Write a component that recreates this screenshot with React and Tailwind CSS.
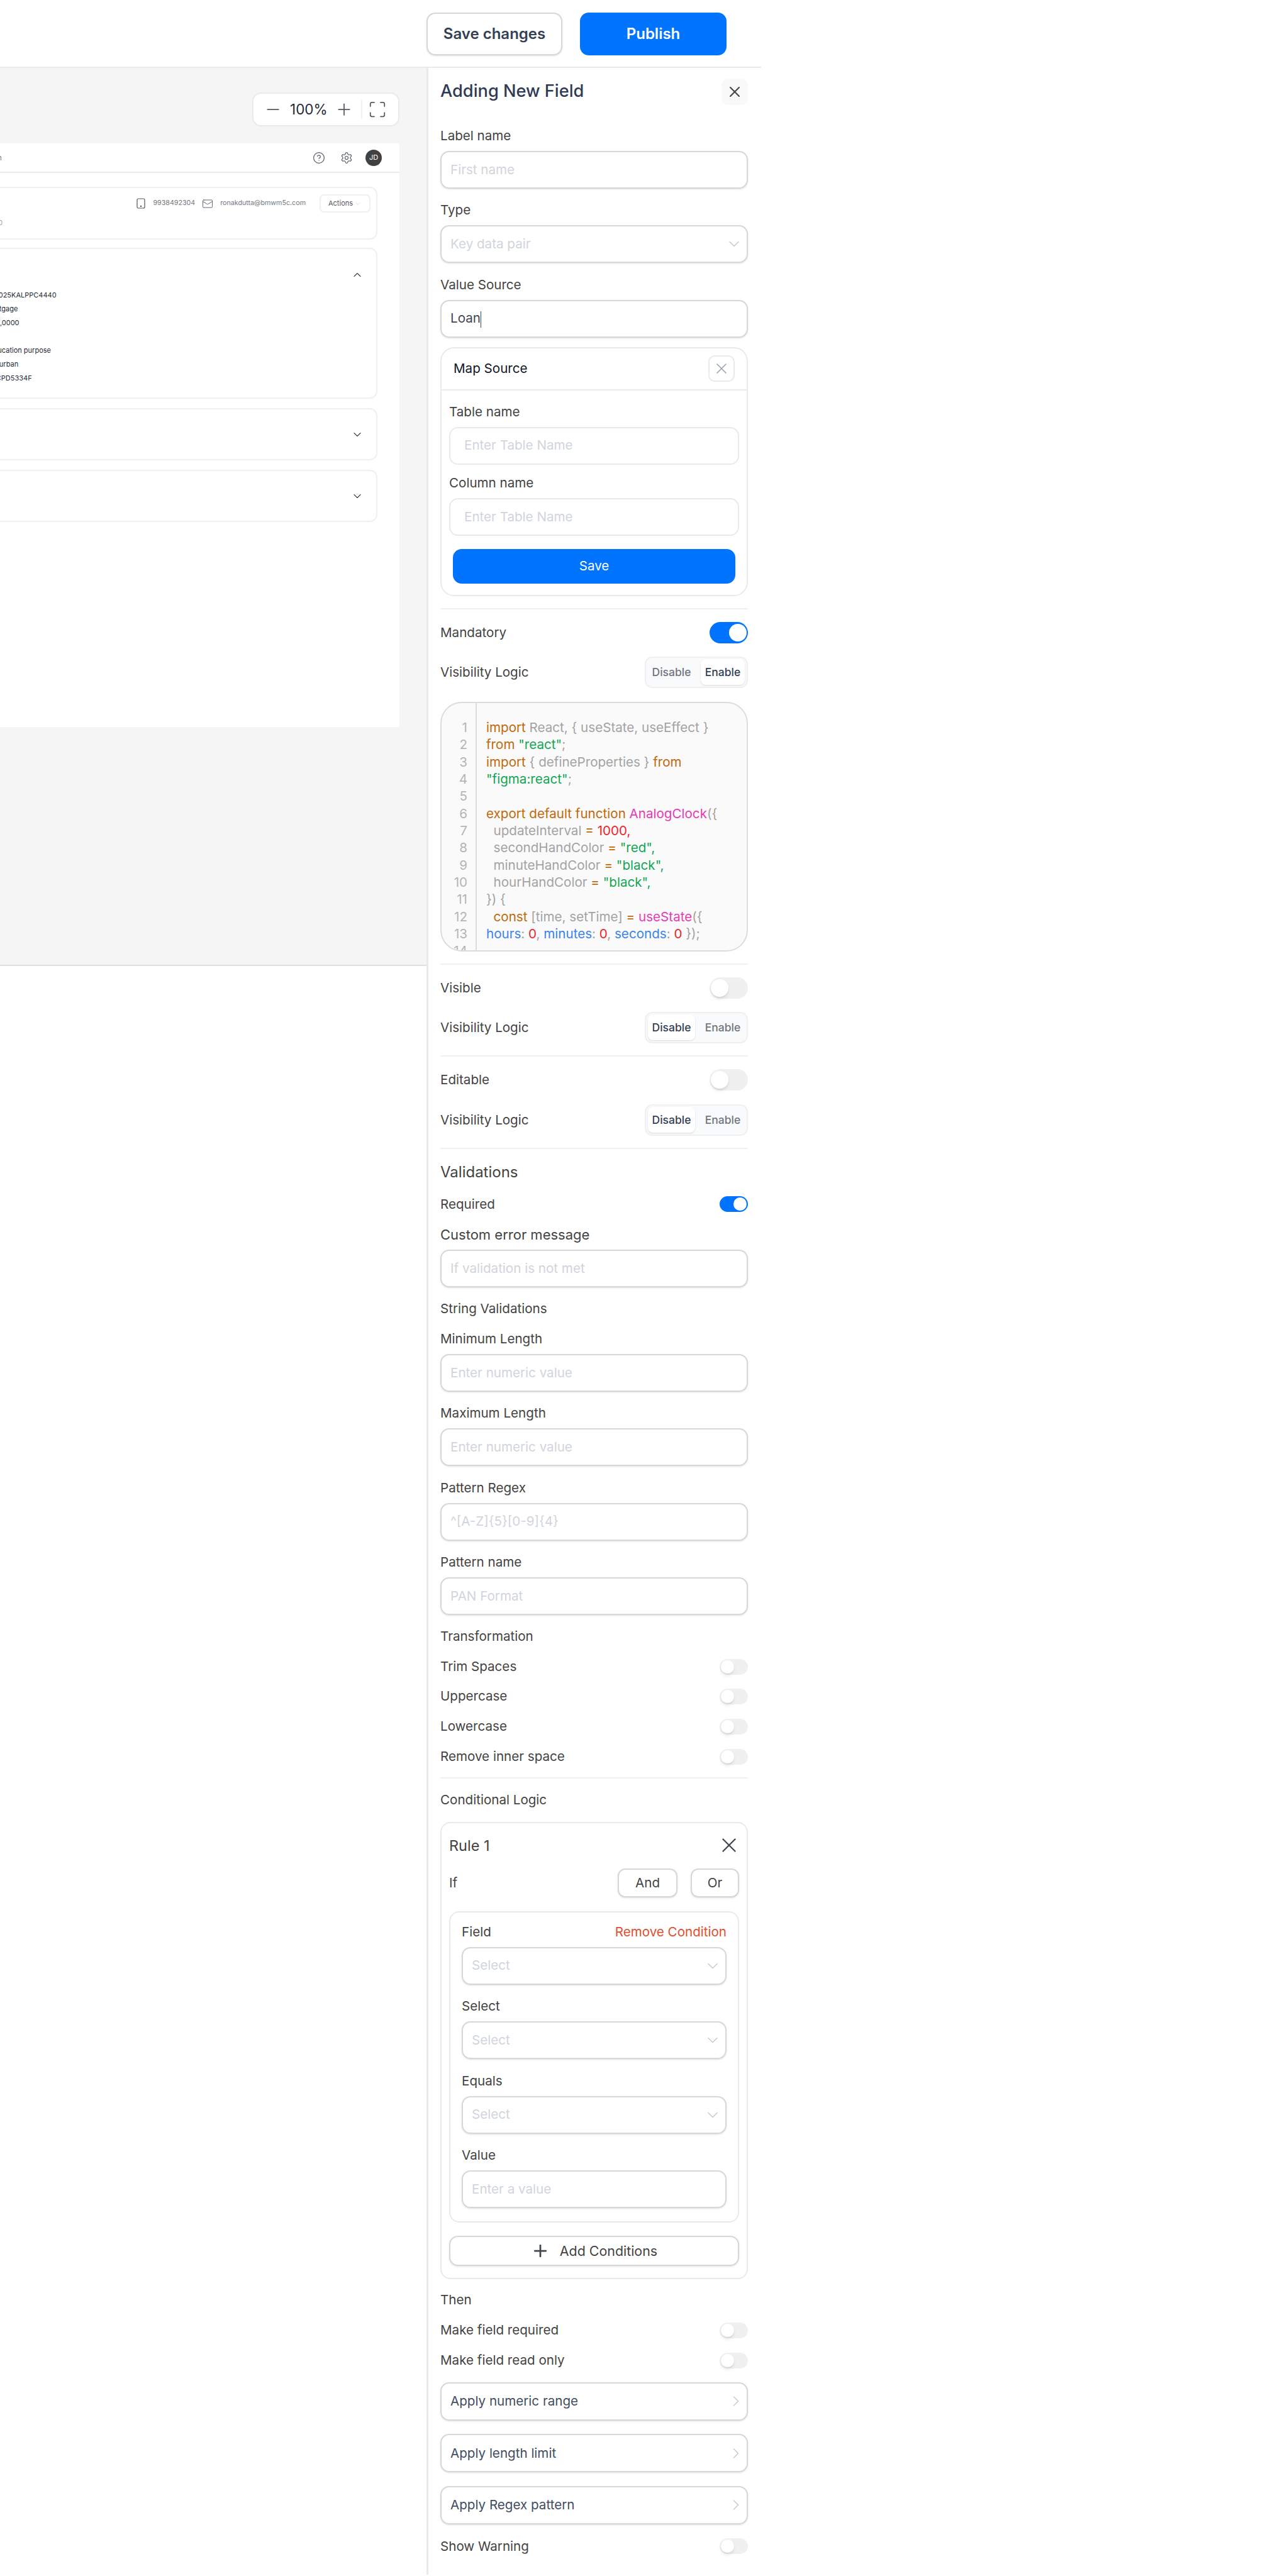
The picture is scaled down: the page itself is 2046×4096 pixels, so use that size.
import { ChevronDown, ChevronRight, ChevronUp, CircleHelp, Mail, Maximize, Minus, Plus, Settings, X } from 'lucide-react';

const OR = 'text-[#c0690a]';
const GR = 'text-[#14a553]';
const GY = 'text-[#a3a3a3]';
const PK = 'text-[#e63bb7]';
const RD = 'text-[#f01f2a]';
const BL = 'text-[#3b82ee]';

const CODE = [
  [[OR, 'import'], [GY, ' React, { useState, useEffect }']],
  [[OR, 'from'], [GR, ' "react"'], [GY, ';']],
  [[OR, 'import'], [GY, ' { defineProperties } '], [OR, 'from']],
  [[GR, '"figma:react"'], [GY, ';']],
  [],
  [[OR, 'export default function'], [PK, ' AnalogClock'], [GY, '({']],
  [[GY, '  updateInterval '], [OR, '='], [RD, ' 1000,']],
  [[GY, '  secondHandColor '], [OR, '='], [GR, ' "red",']],
  [[GY, '  minuteHandColor '], [OR, '='], [GR, ' "black",']],
  [[GY, '  hourHandColor '], [OR, '='], [GR, ' "black",']],
  [[GY, '}) {']],
  [[OR, '  const'], [GY, ' [time, setTime] '], [OR, '='], [PK, ' useState'], [GY, '({']],
  [[BL, 'hours'], [GY, ': '], [RD, '0'], [GY, ', '], [BL, 'minutes'], [GY, ': '], [RD, '0'], [GY, ', '], [BL, 'seconds'], [GY, ': '], [RD, '0'], [GY, ' });']],
  [],
];

// values sit behind the canvas' left edge, so each one keeps its own offset
const INFO_ROWS = [
  { text: '2025KALPPC4440', cls: 'ml-[14px]' },
  { text: 'Mortgage', cls: 'ml-[1px]' },
  { text: '5,00,0000', cls: 'ml-0' },
  { text: '', cls: 'ml-0' },
  { text: 'Education purpose', cls: 'ml-[6px]' },
  { text: 'Semi urban', cls: '-ml-[7px]' },
  { text: 'ABCPD5334F', cls: 'ml-[2px]' },
];

export default function App() {
  return (
    <div className="w-[1210px] bg-white font-['Inter',sans-serif] text-[20.6px] text-[#434343]">
      {/* Top bar */}
      <div className="h-[108px] border-b-2 border-[#e9eaeb] flex items-start justify-end gap-[28px] pt-[20px] pr-[55px]">
        <button className="w-[216px] h-[68px] rounded-[14px] border-2 border-[#d5d7da] shadow-sm text-[24px] font-semibold text-[#344054]">Save changes</button>
        <button className="w-[233px] h-[68px] rounded-[14px] bg-[#0073ff] text-[24px] font-semibold text-white">Publish</button>
      </div>

      <div className="flex">
        <Canvas />
        <Panel />
      </div>
    </div>
  );
}

function Canvas() {
  return (
    <div className="w-[678px] shrink-0 overflow-hidden">
      <div className="h-[1428px] bg-[#f5f5f5] border-b-2 border-[#dfe0e2] pt-[39px] pr-[43px] flex flex-col items-end">
        <div className="w-[234px] h-[54px] bg-white border-2 border-[#e9eaeb] rounded-[14px] flex items-center text-[#252b37] pl-[16px]">
          <Minus size={30} strokeWidth={1.4} className="text-[#535862]" />
          <span className="ml-[12px] text-[22.5px]">100%</span>
          <Plus size={30} strokeWidth={1.4} className="ml-[11px] text-[#535862]" />
          <div className="ml-[12px] w-[2px] h-[30px] bg-[#f0f0f0]" />
          <Maximize size={30} strokeWidth={1.4} className="ml-[9px] text-[#535862]" />
        </div>

        <div className="mt-[27px] w-[660px] h-[928px] bg-white shrink-0">
          <div className="h-[47px] border-b-2 border-[#e9eaeb] flex items-center justify-between pr-[28px]">
            <span className="text-[12px] text-[#717680]">Loan</span>
            <div className="flex items-center">
              <CircleHelp size={20} strokeWidth={1.4} className="text-[#535862]" />
              <Settings size={20} strokeWidth={1.4} className="ml-[24px] text-[#535862]" />
              <div className="ml-[20px] w-[26px] h-[26px] rounded-full bg-[#414141] text-white text-[11px] flex items-center justify-center">JD</div>
            </div>
          </div>

          <div className="w-[625px] mt-[22px] h-[84px] border-2 border-[#f0f0f0] rounded-[12px]">
            <div className="flex items-center justify-end h-[29px] mt-[10px] pr-[9px]">
              <svg width="14" height="17" viewBox="0 0 14 17" fill="none" stroke="#535862" strokeWidth="1.2"><rect x="1" y="1" width="12" height="15" rx="2" /><circle cx="7" cy="13" r="0.6" fill="#535862" /></svg>
              <span className="ml-[12px] text-[10.7px] text-[#717680]">9938492304</span>
              <Mail size={18} strokeWidth={1.2} className="ml-[11px] text-[#535862]" />
              <span className="ml-[11px] text-[10.7px] text-[#717680]">ronakdutta@bmwm5c.com</span>
              <div className="ml-[22px] w-[81px] h-[29px] border-2 border-[#f0f0f0] rounded-[7px] text-[11px] text-[#535862] flex items-center pl-[12px]">
                Actions
                <ChevronDown size={12} strokeWidth={1.4} className="ml-[2px] text-[#c7ccd4]" />
              </div>
            </div>
            <div className="text-[11px] text-[#a3a3a3] mt-[7px] leading-[18px]">2020</div>
          </div>

          <div className="w-[625px] mt-[13px] h-[240px] border-2 border-[#f0f0f0] rounded-[12px] pt-[31px]">
            <div className="flex justify-end pr-[20px] h-[20px]">
              <ChevronUp size={20} strokeWidth={1.4} className="text-[#414651]" />
            </div>
            <div className="mt-[11px]">
              {INFO_ROWS.map((row, i) => (
                <div key={i} className={`h-[22px] leading-[22px] text-[11px] whitespace-nowrap text-[#252b37] ${row.cls}`}>{row.text}</div>
              ))}
            </div>
          </div>

          <CollapsedCard />
          <CollapsedCard />
        </div>
      </div>
    </div>
  );
}

function CollapsedCard() {
  return (
    <div className="w-[625px] mt-[15px] h-[83px] border-2 border-[#f0f0f0] rounded-[12px] flex items-center justify-end pr-[20px]">
      <ChevronDown size={20} strokeWidth={1.4} className="text-[#414651]" />
    </div>
  );
}

function Panel() {
  return (
    <div className="w-[532px] shrink-0 border-l-[3px] border-[#e9eaeb] pl-[19px] pr-[21px] pt-[16px] pb-[29px]">
      <div className="flex items-center justify-between h-[43px]">
        <span className="text-[27.2px] font-medium text-[#2f3b55]">Adding New Field</span>
        <div className="w-[42px] h-[42px] rounded-[10px] bg-[#f9f9f9] flex items-center justify-center">
          <X size={28} strokeWidth={1.8} className="text-[#414651]" />
        </div>
      </div>

      <FieldLabel className="mt-[33px]">Label name</FieldLabel>
      <Box placeholder>First name</Box>
      <FieldLabel className="mt-[18.4px]">Type</FieldLabel>
      <Box placeholder select>Key data pair</Box>
      <FieldLabel className="mt-[18.4px]">Value Source</FieldLabel>
      <Box>
        Loan<span className="inline-block w-[1.5px] h-[26px] bg-[#414651] align-middle" />
      </Box>

      <div className="mt-[15px] h-[396px] border-2 border-[#e9eaeb] rounded-[22px]">
        <div className="h-[67px] border-b-2 border-[#e9eaeb] flex items-center justify-between pl-[19px] pr-[19px]">
          <span className="text-[#101828]">Map Source</span>
          <div className="w-[42px] h-[42px] rounded-[10px] border-2 border-[#e9eaeb] flex items-center justify-center">
            <X size={28} strokeWidth={1.4} className="text-[#98a2b3]" />
          </div>
        </div>
        <div className="px-[12px]">
          <FieldLabel className="mt-[18px]">Table name</FieldLabel>
          <Box placeholder light inset>Enter Table Name</Box>
          <FieldLabel className="mt-[13.5px]">Column name</FieldLabel>
          <Box placeholder light inset>Enter Table Name</Box>
          <button className="mx-[6px] block w-[449px] mt-[21px] h-[55px] rounded-[14px] bg-[#0073ff] text-white">Save</button>
        </div>
      </div>

      <Divider className="mt-[19.2px]" />
      <ToggleRow label="Mandatory" on big className="mt-[20px]" />
      <SegmentRow active="Enable" className="mt-[21px]" />

      {/* Code editor */}
      <div className="mt-[22px] h-[397px] rounded-[34px] border-2 border-[#dcdcdc] bg-[#fafafa] overflow-hidden flex">
        <div className="w-[56px] shrink-0 border-r-2 border-[#dcdcdc] pt-[25px] pr-[13px] text-right text-[#b5b5b5] leading-[27.35px]">
          {CODE.map((_, i) => <div key={i}>{i + 1}</div>)}
        </div>
        <div className="pt-[25px] pl-[15px] whitespace-pre leading-[27.35px]">
          {CODE.map((line, i) => (
            <div key={i} className="h-[27.35px]">
              {line.map(([color, text], j) => <span key={j} className={color}>{text}</span>)}
            </div>
          ))}
        </div>
      </div>

      <Divider className="mt-[19px]" />
      <ToggleRow label="Visible" big className="mt-[20px]" />
      <SegmentRow active="Disable" className="mt-[21px]" />
      <Divider className="mt-[19px]" />
      <ToggleRow label="Editable" big className="mt-[20px]" />
      <SegmentRow active="Disable" className="mt-[22px]" />
      <Divider className="mt-[19px]" />

      <div className="mt-[19px] h-[36px] leading-[36px] text-[24px]">Validations</div>
      <ToggleRow label="Required" on className="mt-[17px]" />
      <FieldLabel className="mt-[16px] text-[22px]">Custom error message</FieldLabel>
      <Box placeholder>If validation is not met</Box>
      <div className="mt-[18px] h-[32px] leading-[32px]">String Validations</div>
      <FieldLabel className="mt-[16px]">Minimum Length</FieldLabel>
      <Box placeholder>Enter numeric value</Box>
      <FieldLabel className="mt-[18.4px]">Maximum Length</FieldLabel>
      <Box placeholder>Enter numeric value</Box>
      <FieldLabel className="mt-[18.4px]">Pattern Regex</FieldLabel>
      <Box placeholder>^[A-Z]{'{5}'}[0-9]{'{4}'}</Box>
      <FieldLabel className="mt-[18.4px]">Pattern name</FieldLabel>
      <Box placeholder>PAN Format</Box>

      <div className="mt-[18px] h-[32px] leading-[32px]">Transformation</div>
      <ToggleRow label="Trim Spaces" className="mt-[16px]" />
      <ToggleRow label="Uppercase" className="mt-[15.7px]" />
      <ToggleRow label="Lowercase" className="mt-[15.7px]" />
      <ToggleRow label="Remove inner space" className="mt-[15.7px]" />
      <Divider className="mt-[17px]" />
      <div className="mt-[18px] h-[32px] leading-[32px]">Conditional Logic</div>

      {/* Rule card */}
      <div className="mt-[19px] border-2 border-[#e9eaeb] rounded-[16px] px-[12px] pt-[17px] pb-[19px]">
        <div className="h-[36px] flex items-center justify-between">
          <span className="text-[23.5px]">Rule 1</span>
          <X size={38} strokeWidth={1.5} className="text-[#414651] -mr-[3px]" />
        </div>
        <div className="mt-[19px] flex items-center">
          <span className="flex-1">If</span>
          <button className="w-[95px] h-[46px] rounded-[12px] border-2 border-[#d5d7da] shadow-sm">And</button>
          <button className="ml-[21px] w-[77px] h-[46px] rounded-[12px] border-2 border-[#d5d7da] shadow-sm">Or</button>
        </div>
        <div className="mt-[21.6px] border-2 border-[#e9eaeb] rounded-[16px] px-[18px] pt-[15px] pb-[21px]">
          <div className="flex justify-between h-[32px] leading-[32px] mb-[8px]">
            <span>Field</span>
            <span className="text-[#e04f2f]">Remove Condition</span>
          </div>
          <Box placeholder select>Select</Box>
          <FieldLabel className="mt-[18.4px]">Select</FieldLabel>
          <Box placeholder select>Select</Box>
          <FieldLabel className="mt-[18.4px]">Equals</FieldLabel>
          <Box placeholder select>Select</Box>
          <FieldLabel className="mt-[18.4px]">Value</FieldLabel>
          <Box placeholder>Enter a value</Box>
        </div>
        <button className="mt-[21px] w-full h-[48px] rounded-[14px] border-2 border-[#d5d7da] shadow-sm flex items-center justify-center">
          <Plus size={30} strokeWidth={2.2} className="text-[#414651]" />
          <span className="ml-[16px] text-[21.4px]">Add Conditions</span>
        </button>
      </div>

      <div className="mt-[17px] h-[32px] leading-[32px]">Then</div>
      <ToggleRow label="Make field required" className="mt-[16.5px]" />
      <ToggleRow label="Make field read only" className="mt-[16px]" />
      <LinkRow className="mt-[18.5px]">Apply numeric range</LinkRow>
      <LinkRow className="mt-[21.5px]">Apply length limit</LinkRow>
      <LinkRow className="mt-[21.5px]">Apply Regex pattern</LinkRow>
      <ToggleRow label="Show Warning" className="mt-[19px]" />
    </div>
  );
}

function FieldLabel({ children, className }) {
  return <div className={`h-[32px] leading-[32px] mb-[8px] ${className}`}>{children}</div>;
}

function Box({ children, placeholder, select, light, inset }) {
  return (
    <div className={`h-[60px] rounded-[14px] border-2 flex items-center justify-between pr-[6px] ${light ? 'border-[#e9eaeb]' : 'border-[#d5d7da] shadow-sm'} ${inset ? 'pl-[22px]' : 'pl-[14px]'} ${placeholder ? 'text-[#d0d5dd]' : 'text-[#414651]'}`}>
      <span>{children}</span>
      {select && <ChevronDown size={28} strokeWidth={1.4} className="text-[#c7ccd4]" />}
    </div>
  );
}

function LinkRow({ children, className }) {
  return (
    <div className={`h-[61px] rounded-[14px] border-2 border-[#d5d7da] shadow-sm flex items-center justify-between pl-[14px] pr-[3px] text-[#414d60] ${className}`}>
      <span>{children}</span>
      <ChevronRight size={28} strokeWidth={1.4} className="text-[#c7ccd4]" />
    </div>
  );
}

function Divider({ className }) {
  return <div className={`h-[2px] bg-[#f0f0f0] ${className}`} />;
}

function ToggleRow({ label, on, big, className }) {
  return (
    <div className={`flex items-center justify-between ${big ? 'h-[34px]' : 'h-[32px]'} ${className}`}>
      <span>{label}</span>
      <Toggle on={on} big={big} />
    </div>
  );
}

function Toggle({ on, big }) {
  return (
    <div className={`rounded-full flex items-center p-[2px] ${big ? 'w-[61px] h-[34px]' : 'w-[45px] h-[25px]'} ${on ? 'bg-[#0073ff] justify-end' : 'bg-[#f0f0f0] justify-start'}`}>
      <div className={`rounded-full bg-white ${big ? 'w-[28px] h-[28px]' : 'w-[21px] h-[21px]'} ${on ? '' : 'shadow-md'}`} />
    </div>
  );
}

function SegmentRow({ active, className }) {
  return (
    <div className={`flex items-center justify-between ${className}`}>
      <span>Visibility Logic</span>
      <div className="w-[164px] h-[50px] rounded-[12px] border-2 border-[#f0f0f0] bg-[#f9fafb] flex items-center pl-[3px] pr-[3px] gap-[9px] text-[17.5px] font-medium">
        <div className={`w-[75px] h-[41px] rounded-[8px] flex items-center justify-center ${active === 'Disable' ? 'bg-white shadow-sm text-[#344054]' : 'text-[#717680]'}`}>Disable</div>
        <div className={`w-[70px] h-[41px] rounded-[8px] flex items-center justify-center ${active === 'Enable' ? 'bg-white shadow-sm text-[#344054]' : 'text-[#717680]'}`}>Enable</div>
      </div>
    </div>
  );
}
